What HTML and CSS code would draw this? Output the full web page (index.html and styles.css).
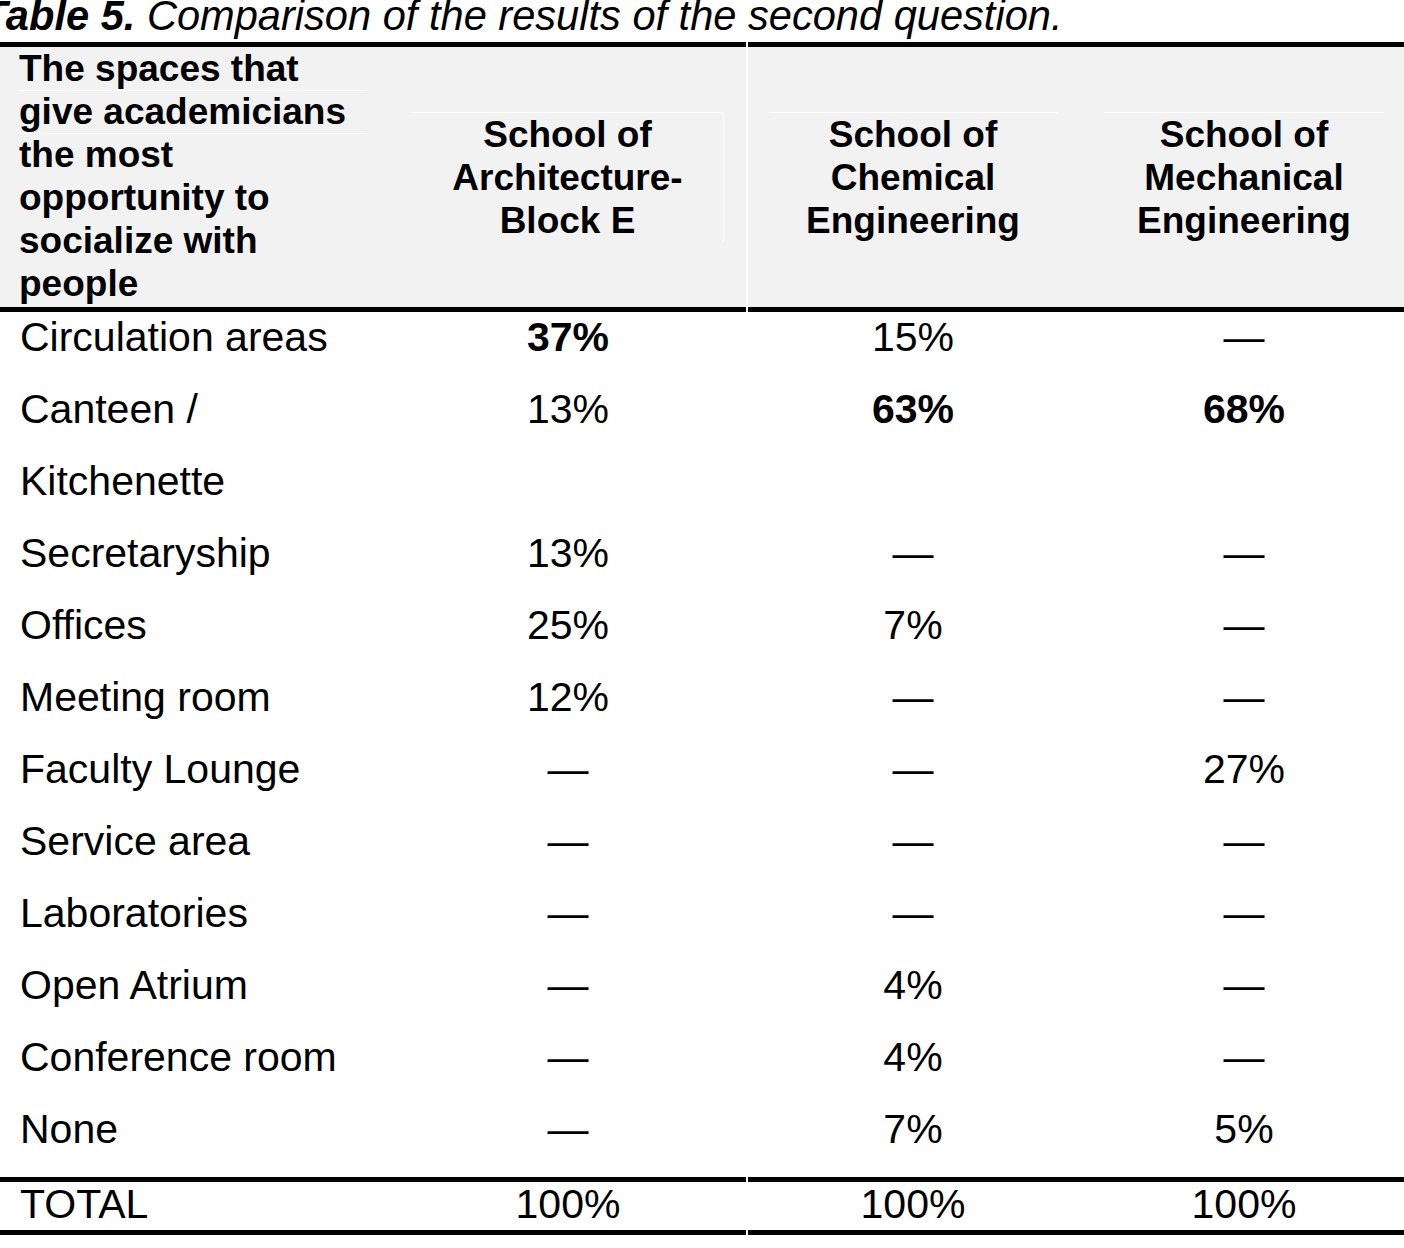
FILE: index.html
```html
<!DOCTYPE html>
<html lang="en">
<head>
<meta charset="utf-8">
<title>Table 5</title>
<link rel="stylesheet" href="styles.css">
</head>
<body>
<div class="page">
  <p class="caption"><b>Table 5.</b> Comparison of the results of the second question.</p>
  <div class="table">
    <div class="row head">
      <div class="cell c1"><div class="head-left">The spaces that give academicians the most opportunity to socialize with people</div></div>
      <div class="cell c2"><div class="hbox arch">School of<br>Architecture-<br>Block E</div></div>
      <div class="cell c3"><div class="hbox chem">School of<br>Chemical<br>Engineering</div></div>
      <div class="cell c4"><div class="hbox mech">School of<br>Mechanical<br>Engineering</div></div>
    </div>
    <div class="body">
      <div class="row"><div class="cell c1">Circulation areas</div><div class="cell c2"><b>37%</b></div><div class="cell c3">15%</div><div class="cell c4">—</div></div>
      <div class="row"><div class="cell c1">Canteen / Kitchenette</div><div class="cell c2">13%</div><div class="cell c3"><b>63%</b></div><div class="cell c4"><b>68%</b></div></div>
      <div class="row"><div class="cell c1">Secretaryship</div><div class="cell c2">13%</div><div class="cell c3">—</div><div class="cell c4">—</div></div>
      <div class="row"><div class="cell c1">Offices</div><div class="cell c2">25%</div><div class="cell c3">7%</div><div class="cell c4">—</div></div>
      <div class="row"><div class="cell c1">Meeting room</div><div class="cell c2">12%</div><div class="cell c3">—</div><div class="cell c4">—</div></div>
      <div class="row"><div class="cell c1">Faculty Lounge</div><div class="cell c2">—</div><div class="cell c3">—</div><div class="cell c4">27%</div></div>
      <div class="row"><div class="cell c1">Service area</div><div class="cell c2">—</div><div class="cell c3">—</div><div class="cell c4">—</div></div>
      <div class="row"><div class="cell c1">Laboratories</div><div class="cell c2">—</div><div class="cell c3">—</div><div class="cell c4">—</div></div>
      <div class="row"><div class="cell c1">Open Atrium</div><div class="cell c2">—</div><div class="cell c3">4%</div><div class="cell c4">—</div></div>
      <div class="row"><div class="cell c1">Conference room</div><div class="cell c2">—</div><div class="cell c3">4%</div><div class="cell c4">—</div></div>
      <div class="row"><div class="cell c1">None</div><div class="cell c2">—</div><div class="cell c3">7%</div><div class="cell c4">5%</div></div>
    </div>
    <div class="row total">
      <div class="cell c1">TOTAL</div><div class="cell c2">100%</div><div class="cell c3">100%</div><div class="cell c4">100%</div>
    </div>
  </div>
</div>
</body>
</html>
```

FILE: styles.css
```css
html, body {
  margin: 0;
  padding: 0;
  background: #fff;
}

body {
  font-family: "Liberation Sans", Arial, sans-serif;
  color: #000;
  overflow: hidden;
}

.page {
  width: 1404px;
}

.caption {
  margin: 0 0 10px 0;
  font-size: 41.6px;
  line-height: 32px;
  height: 32px;
  font-style: italic;
  white-space: nowrap;
  text-indent: -18px;
}

.caption b {
  font-weight: bold;
}

.row {
  display: grid;
  grid-template-columns: 390px 356px 332px 326px;
}

.c3 {
  margin-left: 2px;
}

.c4 {
  padding-left: 6px;
}

/* header */
.head .cell {
  background: #f2f2f2;
  border-top: 5px solid #000;
  border-bottom: 5px solid #000;
  height: 260px;
  display: flex;
  align-items: center;
  justify-content: center;
  font-weight: bold;
  font-size: 37px;
  line-height: 43px;
  text-align: center;
}

.head .c1 {
  justify-content: flex-start;
  align-items: flex-start;
  padding-left: 19px;
  text-align: left;
}

.head-left {
  width: 347px;
  background:
    linear-gradient(#fff, #fff) 0 43px / 100% 1px no-repeat,
    linear-gradient(#fff, #fff) 0 86px / 100% 1px no-repeat;
}

.hbox {
  border-top: 1px solid #fff;
}

.arch {
  width: 311px;
  border-right: 1px solid #fff;
}

.chem {
  width: 288px;
}

.mech {
  width: 280px;
}

/* body */
.body {
  margin-top: -11px;
  padding-bottom: 12px;
}

.body .cell {
  font-size: 41px;
  line-height: 72px;
  text-align: center;
}

.body .c1,
.total .c1 {
  text-align: left;
  padding-left: 20px;
  padding-right: 20px;
}

/* total */
.total .cell {
  border-top: 5px solid #000;
  border-bottom: 5px solid #000;
  font-size: 41px;
  line-height: 44px;
  height: 48px;
  text-align: center;
}

.total .c1 {
  text-align: left;
}
```
